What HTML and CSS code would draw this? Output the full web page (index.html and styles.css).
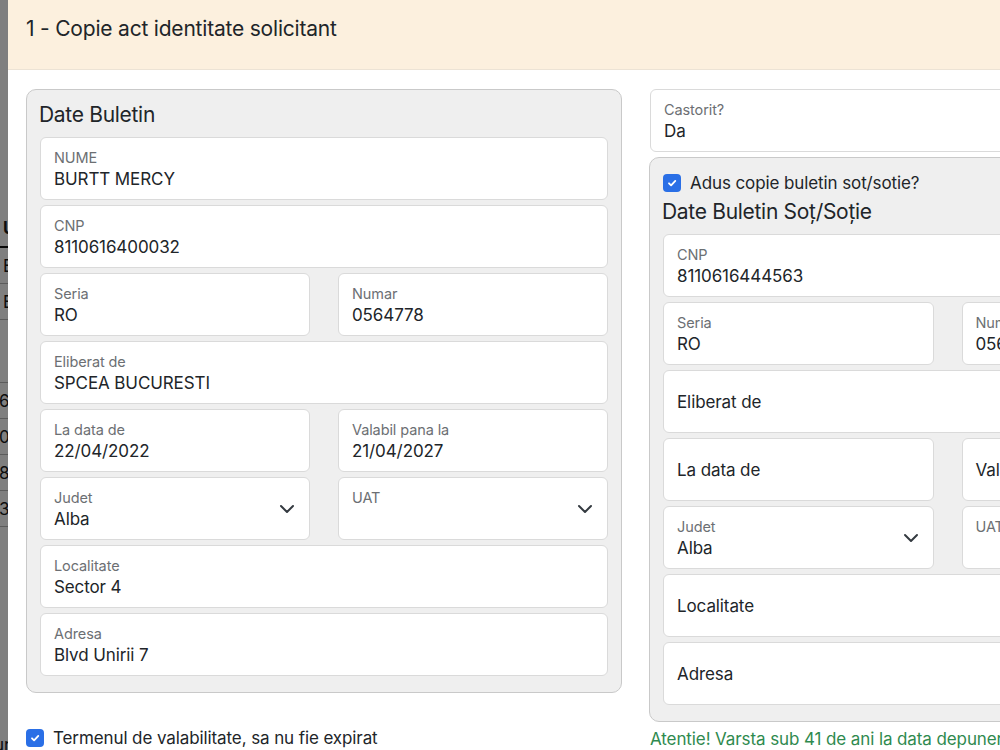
FILE: index.html
```html
<!DOCTYPE html>
<html lang="ro">
<head>
<meta charset="utf-8">
<title>Copie act identitate solicitant</title>
<link rel="stylesheet" href="styles.css">
</head>
<body>
<div class="page">
  <table class="bg-table">
    <thead><tr><th>U</th></tr></thead>
    <tbody>
      <tr><td>E</td></tr>
      <tr><td>E</td></tr>
      <tr class="tall"><td></td></tr>
      <tr><td class="num">6</td></tr>
      <tr><td class="num">0,</td></tr>
      <tr><td class="num">8</td></tr>
      <tr><td class="num">3.</td></tr>
    </tbody>
  </table>
  <div class="bg-foot">ur</div>
</div>
<div class="backdrop"></div>
<div class="modal">
  <div class="modal-header"><h5 class="modal-title">1 - Copie act identitate solicitant</h5></div>
  <div class="modal-body">
    <div class="col">
      <div class="card">
        <h4 class="card-title">Date Buletin</h4>
        <div class="fields">
          <div class="field"><span class="lbl">NUME</span><span class="val">BURTT MERCY</span></div>
          <div class="field"><span class="lbl">CNP</span><span class="val">8110616400032</span></div>
          <div class="row2">
            <div class="field"><span class="lbl">Seria</span><span class="val">RO</span></div>
            <div class="field"><span class="lbl">Numar</span><span class="val">0564778</span></div>
          </div>
          <div class="field"><span class="lbl">Eliberat de</span><span class="val">SPCEA BUCURESTI</span></div>
          <div class="row2">
            <div class="field"><span class="lbl">La data de</span><span class="val">22/04/2022</span></div>
            <div class="field"><span class="lbl">Valabil pana la</span><span class="val">21/04/2027</span></div>
          </div>
          <div class="row2">
            <div class="field select"><span class="lbl">Judet</span><span class="val">Alba</span>
              <svg class="chev" width="16" height="12" viewBox="0 2 16 12"><path d="M2 5l6 6 6-6" fill="none" stroke="#343a40" stroke-width="2" stroke-linecap="round" stroke-linejoin="round"/></svg>
            </div>
            <div class="field select"><span class="lbl">UAT</span><span class="val"></span>
              <svg class="chev" width="16" height="12" viewBox="0 2 16 12"><path d="M2 5l6 6 6-6" fill="none" stroke="#343a40" stroke-width="2" stroke-linecap="round" stroke-linejoin="round"/></svg>
            </div>
          </div>
          <div class="field"><span class="lbl">Localitate</span><span class="val">Sector 4</span></div>
          <div class="field"><span class="lbl">Adresa</span><span class="val">Blvd Unirii 7</span></div>
        </div>
      </div>
      <label class="check check-bottom"><span class="box"><svg width="12" height="12" viewBox="0 0 20 20"><path d="M5 10.5l3.5 3.5 7-7.5" fill="none" stroke="#fff" stroke-width="3" stroke-linecap="round" stroke-linejoin="round"/></svg></span>Termenul de valabilitate, sa nu fie expirat</label>
    </div>
    <div class="col">
      <div class="field"><span class="lbl">Castorit?</span><span class="val">Da</span></div>
      <div class="card spouse">
        <label class="check"><span class="box"><svg width="12" height="12" viewBox="0 0 20 20"><path d="M5 10.5l3.5 3.5 7-7.5" fill="none" stroke="#fff" stroke-width="3" stroke-linecap="round" stroke-linejoin="round"/></svg></span>Adus copie buletin sot/sotie?</label>
        <h4 class="card-title spouse-title">Date Buletin Soț/Soție</h4>
        <div class="fields">
          <div class="field"><span class="lbl">CNP</span><span class="val">8110616444563</span></div>
          <div class="row2">
            <div class="field"><span class="lbl">Seria</span><span class="val">RO</span></div>
            <div class="field"><span class="lbl">Numar</span><span class="val">0564778</span></div>
          </div>
          <div class="field empty"><span class="lbl">Eliberat de</span></div>
          <div class="row2">
            <div class="field empty"><span class="lbl">La data de</span></div>
            <div class="field empty"><span class="lbl">Valabil pana la</span></div>
          </div>
          <div class="row2">
            <div class="field select"><span class="lbl">Judet</span><span class="val">Alba</span>
              <svg class="chev" width="16" height="12" viewBox="0 2 16 12"><path d="M2 5l6 6 6-6" fill="none" stroke="#343a40" stroke-width="2" stroke-linecap="round" stroke-linejoin="round"/></svg>
            </div>
            <div class="field select"><span class="lbl">UAT</span><span class="val"></span>
              <svg class="chev" width="16" height="12" viewBox="0 2 16 12"><path d="M2 5l6 6 6-6" fill="none" stroke="#343a40" stroke-width="2" stroke-linecap="round" stroke-linejoin="round"/></svg>
            </div>
          </div>
          <div class="field empty"><span class="lbl">Localitate</span></div>
          <div class="field empty"><span class="lbl">Adresa</span></div>
        </div>
      </div>
      <div class="warn">Atentie! Varsta sub 41 de ani la data depunerii cererii</div>
    </div>
  </div>
</div>
</body>
</html>
```

FILE: styles.css
```css
html, body {
  margin: 0;
  width: 1000px;
  height: 750px;
  overflow: hidden;
}
body {
  font-family: Inter, "Liberation Sans", Arial, sans-serif;
  color: #212529;
  background: #fff;
  letter-spacing: -0.1px;
}

/* background page, under the backdrop */
.page {
  padding-top: 210px;
}
.bg-table {
  border-collapse: collapse;
  width: 60px;
  font-size: 17px;
  color: #1b1b1b;
}
.bg-table th {
  height: 36px;
  text-align: left;
  padding: 0 0 0 3px;
  font-weight: 700;
  border-bottom: 2px solid #111;
}
.bg-table td {
  height: 35px;
  padding: 0 0 0 3px;
  border-bottom: 1px solid #b8b8b8;
}
.bg-table td.num {
  padding-left: 0;
  text-indent: -1px;
}
.bg-table tr.tall td {
  height: 62px;
}
.bg-foot {
  margin-top: 206px;
  line-height: 24px;
  font-size: 17px;
  text-indent: -6px;
  color: #1b1b1b;
}

.backdrop {
  position: fixed;
  inset: 0;
  background: rgba(0, 0, 0, 0.5);
}

/* modal */
.modal {
  position: fixed;
  left: 8px;
  top: 0;
  width: 1290px;
  height: 750px;
  background: #fff;
}
.modal-header {
  background: #fcf0de;
  border-bottom: 1px solid #ece3d5;
  padding: 16px 18px 0;
  height: 53px;
}
.modal-title {
  margin: 0;
  font-size: 21px;
  line-height: 26px;
  font-weight: 400;
  letter-spacing: -0.2px;
}
.modal-body {
  display: grid;
  grid-template-columns: 596px 596px;
  column-gap: 28px;
  padding: 19px 18px;
  align-items: start;
}
.col {
  display: flex;
  flex-direction: column;
}

.card {
  background: #efefef;
  border: 1px solid #c9c9c9;
  border-radius: 10px;
  padding: 12px 13px 16px;
}
.card-title {
  margin: 0 0 9px -1px;
  font-size: 21px;
  line-height: 26px;
  font-weight: 400;
  letter-spacing: -0.3px;
}
.fields {
  display: flex;
  flex-direction: column;
  gap: 5px;
}
.row2 {
  display: grid;
  grid-template-columns: 1fr 1fr;
  column-gap: 28px;
}
.field {
  position: relative;
  height: 63px;
  box-sizing: border-box;
  background: #fff;
  border: 1px solid #dadada;
  border-radius: 6px;
  padding: 10px 13px 0;
}
.lbl {
  display: block;
  font-size: 14.5px;
  line-height: 19px;
  color: #6c6f73;
}
.val {
  display: block;
  font-size: 17px;
  line-height: 22px;
  margin-top: 1px;
  min-height: 22px;
}
.field.empty {
  display: flex;
  align-items: center;
  padding-top: 0;
}
.field.empty .lbl {
  font-size: 17px;
  line-height: 22px;
  color: #212529;
}
.chev {
  position: absolute;
  right: 14px;
  top: 25px;
}

.check {
  display: flex;
  align-items: center;
  gap: 9px;
  font-size: 17px;
  line-height: 24px;
}
.box {
  width: 18px;
  height: 18px;
  border-radius: 4px;
  background: #2a6fe6;
  display: flex;
  align-items: center;
  justify-content: center;
  flex: none;
}
.check-bottom {
  margin-top: 33px;
}

.spouse {
  margin-top: 5px;
  margin-left: -1px;
  padding: 13px 13px 16px;
}
.spouse-title {
  margin: 4px 0 9px -1px;
}
.warn {
  margin-top: 5px;
  font-size: 17px;
  line-height: 24px;
  color: #2f8a4f;
  white-space: nowrap;
}
```
